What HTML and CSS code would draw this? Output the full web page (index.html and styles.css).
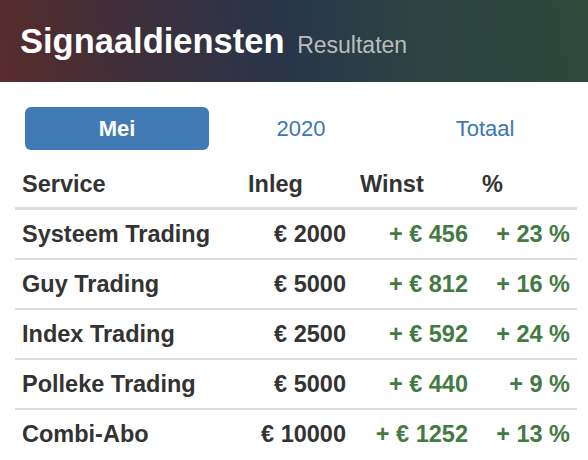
FILE: index.html
```html
<!DOCTYPE html>
<html lang="nl">
<head>
<meta charset="utf-8">
<title>Signaaldiensten Resultaten</title>
<link rel="stylesheet" href="styles.css">
</head>
<body>
<header class="banner">
  <h1 class="title">Signaaldiensten <small class="subtitle">Resultaten</small></h1>
</header>
<nav class="tabs">
  <a class="tab active" href="#">Mei</a>
  <a class="tab" href="#">2020</a>
  <a class="tab" href="#">Totaal</a>
</nav>
<table class="results">
  <colgroup>
    <col class="c-service">
    <col class="c-inleg">
    <col class="c-winst">
    <col class="c-pct">
  </colgroup>
  <thead>
    <tr><th>Service</th><th>Inleg</th><th>Winst</th><th>%</th></tr>
  </thead>
  <tbody>
    <tr><td>Systeem Trading</td><td class="num">€ 2000</td><td class="num gain">+ € 456</td><td class="num gain">+ 23 %</td></tr>
    <tr><td>Guy Trading</td><td class="num">€ 5000</td><td class="num gain">+ € 812</td><td class="num gain">+ 16 %</td></tr>
    <tr><td>Index Trading</td><td class="num">€ 2500</td><td class="num gain">+ € 592</td><td class="num gain">+ 24 %</td></tr>
    <tr><td>Polleke Trading</td><td class="num">€ 5000</td><td class="num gain">+ € 440</td><td class="num gain">+ 9 %</td></tr>
    <tr><td>Combi-Abo</td><td class="num">€ 10000</td><td class="num gain">+ € 1252</td><td class="num gain">+ 13 %</td></tr>
  </tbody>
</table>
</body>
</html>
```

FILE: styles.css
```css
* { box-sizing: border-box; }
html, body { margin: 0; padding: 0; background: #fff; }
body {
  font-family: "Liberation Sans", Arial, Helvetica, sans-serif;
  color: #333;
  width: 588px;
  height: 460px;
  overflow: hidden;
}
.banner {
  height: 82px;
  padding: 21px 0 0 20px;
  background: linear-gradient(80deg, #5a2b2b 0%, #3f2f3a 22%, #29354a 48%, #2b4342 70%, #2d4a3b 100%);
}
.title {
  margin: 0;
  font-size: 34.5px;
  line-height: 40px;
  font-weight: bold;
  color: #fff;
  white-space: nowrap;
}
.subtitle {
  font-size: 23px;
  font-weight: normal;
  color: #bcbcbc;
  margin-left: 3px;
}
.tabs {
  display: grid;
  grid-template-columns: repeat(3, 1fr);
  margin: 25px 11px 0 25px;
}
.tab {
  display: block;
  height: 43px;
  padding-top: 1px;
  line-height: 42px;
  text-align: center;
  font-size: 22px;
  color: #3a78b4;
  text-decoration: none;
  border-radius: 6px;
}
.tab.active {
  background: #417bb5;
  color: #fff;
  font-weight: bold;
}
.results {
  margin: 10px 0 0 15px;
  width: 562px;
  table-layout: fixed;
  border-collapse: separate;
  border-spacing: 0;
  font-size: 23.5px;
  line-height: 26px;
  font-weight: bold;
}
.c-service { width: 226px; }
.c-inleg { width: 112px; }
.c-winst { width: 122px; }
.c-pct { width: 102px; }
.results th {
  text-align: left;
  padding: 11px 7px 10px;
  border-bottom: 3px solid #ddd;
  white-space: nowrap;
}
.results td {
  padding: 11px 7px;
  height: 48px;
  white-space: nowrap;
}
.results tbody tr + tr td {
  border-top: 2px solid #ddd;
  height: 50px;
}
.results .num { text-align: right; }
.results .gain { color: #437a42; }
```
